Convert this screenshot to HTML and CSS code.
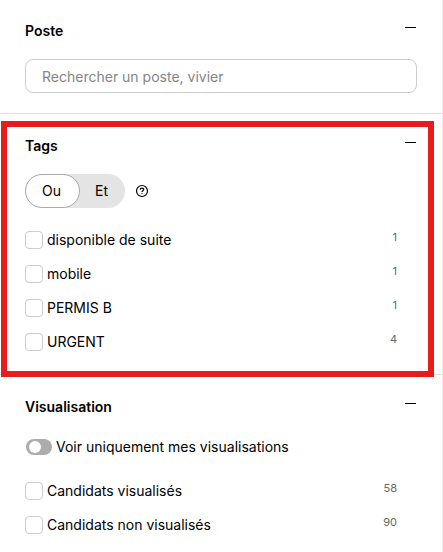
FILE: index.html
```html
<!DOCTYPE html>
<html lang="fr">
<head>
<meta charset="utf-8">
<title>Filtres</title>
<link rel="stylesheet" href="styles.css">
</head>
<body>
<main class="panel">
  <section class="section poste">
    <header><h2>Poste</h2><i class="minus"></i></header>
    <input class="search" type="text" placeholder="Rechercher un poste, vivier">
  </section>
  <section class="section tags">
    <header><h2>Tags</h2><i class="minus"></i></header>
    <div class="mode">
      <div class="segmented"><span class="option active">Ou</span><span class="option">Et</span></div>
      <svg class="help" viewBox="0 0 14 14"><circle cx="7" cy="7" r="5.5"/><path d="M5.3 5.8C5.3 3.6 8.7 3.6 8.7 5.6C8.7 6.8 7 6.7 7 8"/><path d="M7 9V10"/></svg>
    </div>
    <label class="row"><i class="box"></i><span class="name">disponible de suite</span><span class="count link">1</span></label>
    <label class="row"><i class="box"></i><span class="name">mobile</span><span class="count link">1</span></label>
    <label class="row"><i class="box"></i><span class="name">PERMIS B</span><span class="count link">1</span></label>
    <label class="row"><i class="box"></i><span class="name">URGENT</span><span class="count">4</span></label>
  </section>
  <section class="section views">
    <header><h2>Visualisation</h2><i class="minus"></i></header>
    <div class="toggle-row"><i class="toggle"></i><span>Voir uniquement mes visualisations</span></div>
    <label class="row"><i class="box"></i><span class="name">Candidats visualisés</span><span class="count">58</span></label>
    <label class="row"><i class="box"></i><span class="name">Candidats non visualisés</span><span class="count">90</span></label>
  </section>
  <div class="highlight"></div>
</main>
</body>
</html>
```
FILE: styles.css
```css
* { box-sizing: border-box; }
body { margin: 0; background: #fff; color: #000; font: 14px/20px Inter, sans-serif; }
.panel { position: relative; width: 443px; height: 552px; overflow: hidden; border-right: 1px solid #ebebeb; }
.section { padding: 0 25px; }
.poste { height: 114px; padding-top: 21px; border-bottom: 1px solid #e0e0e0; }
.tags { height: 261px; padding-top: 22px; border-bottom: 1px solid #e0e0e0; }
.views { padding-top: 22px; }
header { display: flex; justify-content: space-between; height: 20px; }
h2 { margin: 0; font-size: 14px; line-height: 20px; font-weight: 600; }
.minus { width: 11px; height: 1px; margin: 6px 1px 0 0; background: #000; }
.search { display: block; width: 392px; height: 34px; margin-top: 18px; padding: 0 16px; border: 1px solid #ccc; border-radius: 8px; font: 14px Inter, sans-serif; }
.search::placeholder { color: #858585; opacity: 1; }
.mode { display: flex; align-items: center; gap: 10px; margin: 18px 0 15px; }
.segmented { display: flex; width: 100px; height: 34px; border-radius: 17px; background: #e4e4e4; }
.option { width: 45px; padding-right: 2px; line-height: 34px; text-align: center; }
.option.active { width: 55px; line-height: 32px; border: 1px solid #aaa; border-radius: 17px; background: #fff; }
.help { width: 14px; height: 14px; fill: none; stroke: #000; stroke-width: 1.2; }
.row { display: flex; align-items: center; height: 34px; }
.box { width: 18px; height: 18px; border: 1px solid #ccc; border-radius: 4px; }
.name { margin-left: 4px; }
.count { margin: -6px 20px 0 auto; font-size: 11px; color: #666; }
.link { color: #2f73b8; }
.toggle-row { display: flex; align-items: center; height: 20px; margin: 20px 0 17px; }
.toggle { width: 26px; height: 16px; margin: 0 4px 0 1px; border-radius: 8px; background: #acacac; }
.toggle::before { content: ""; display: block; width: 12px; height: 12px; margin: 2px 3px; border-radius: 50%; background: #fff; }
.highlight { position: absolute; left: 1px; top: 121px; width: 433px; height: 256px; border: 6px solid #e81c1c; }
```
